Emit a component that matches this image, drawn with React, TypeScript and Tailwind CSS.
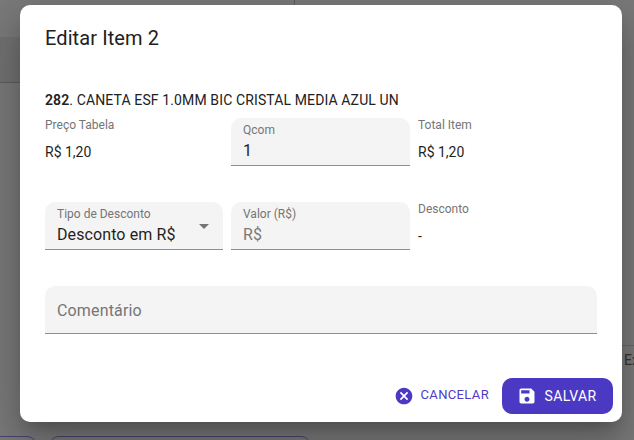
const roboto = "font-['Roboto',sans-serif]";

function Field({ label, value, muted }: { label: string; value: string; muted?: boolean }) {
  return (
    <div className="h-[48px] rounded-t-[10px] bg-[#f4f4f4] border-b border-[#8f8f8f] px-3 flex flex-col">
      <span className="text-xs leading-[14px] text-[#757575] mt-[5px]">{label}</span>
      <span className={`text-base leading-[24px] tracking-[0.1px] mt-[2px] ${muted ? "text-[#7a7a7a]" : "text-[#1f1f1f]"}`}>{value}</span>
    </div>
  );
}

function ReadOnly({ label, value }: { label: string; value: string }) {
  return (
    <div className="h-[48px] flex flex-col">
      <span className="text-xs leading-[14px] text-[#757575]">{label}</span>
      <span className="text-sm leading-[20px] text-[#1f1f1f] mt-[10px]">{value}</span>
    </div>
  );
}

export default function App() {
  return (
    <div className={`relative w-[634px] h-[440px] overflow-hidden bg-[#7a7a7a] ${roboto}`}>
      {/* page behind the backdrop */}
      <div className="absolute left-0 top-[37px] w-[20px] h-[46px] bg-[#727272] border-b border-[#5c5c5c]" />
      <div className="absolute left-[294px] top-0 w-px h-[5px] bg-[#5f5f5f]" />
      <div className="absolute left-[622px] top-[345px] w-[12px] h-px bg-[#666666]" />
      <span className="absolute left-[624px] top-[352px] text-sm leading-[16px] text-[#333333]">Ex</span>
      <div className="absolute left-[-10px] top-[436px] w-[47px] h-[20px] rounded-[10px] border border-[#4a4372]" />
      <div className="absolute left-[49px] top-[436px] w-[262px] h-[20px] rounded-[10px] border border-[#4a4372]" />

      {/* dialog */}
      <div className="absolute left-[20px] top-[5px] w-[602px] h-[417px] bg-white rounded-[10px] shadow-[0_11px_15px_-7px_rgba(0,0,0,0.2),0_24px_38px_3px_rgba(0,0,0,0.14),0_9px_46px_8px_rgba(0,0,0,0.12)] flex flex-col pl-[25px] pr-[25px]">
        <h2 className="text-xl leading-[24px] tracking-[0.1px] text-[#212121] mt-[21px]">Editar Item 2</h2>
        <p className="text-sm leading-[20px] tracking-[0.12px] text-[#212121] mt-[40px]">
          <b className="font-semibold">282</b>. CANETA ESF 1.0MM BIC CRISTAL MEDIA AZUL UN
        </p>
        <div className="grid grid-cols-[178px_179px_1fr] gap-x-2 mt-[8px]">
          <ReadOnly label="Preço Tabela" value="R$ 1,20" />
          <Field label="Qcom" value="1" />
          <ReadOnly label="Total Item" value="R$ 1,20" />
        </div>
        <div className="grid grid-cols-[178px_179px_1fr] gap-x-2 mt-[36px]">
          <div className="relative">
            <Field label="Tipo de Desconto" value="Desconto em R$" />
            <svg viewBox="0 0 24 24" className="absolute right-[7px] top-[12px] w-6 h-6 fill-[#757575]">
              <path d="M7 10l5 5 5-5z" />
            </svg>
          </div>
          <Field label="Valor (R$)" value="R$" muted />
          <ReadOnly label="Desconto" value="-" />
        </div>
        <div className="h-[48px] mt-[36px] rounded-t-[10px] bg-[#f4f4f4] border-b border-[#8f8f8f] px-3 pt-[2px] flex items-center text-base tracking-[0.15px] text-[#757575]">
          Comentário
        </div>
        <div className="flex justify-end items-center gap-[13px] mt-[44px] -mr-[16px]">
          <button className="flex items-center gap-[7px] text-[#4f3cc4] text-[13px] tracking-[0.35px]">
            <svg viewBox="0 0 24 24" className="w-5 h-5 fill-[#4b39c3]">
              <path d="M12 2C6.47 2 2 6.47 2 12s4.47 10 10 10 10-4.47 10-10S17.53 2 12 2zm5 13.59L15.59 17 12 13.41 8.41 17 7 15.59 10.59 12 7 8.41 8.41 7 12 10.59 15.59 7 17 8.41 13.41 12 17 15.59z" />
            </svg>
            <span className="-translate-y-px">CANCELAR</span>
          </button>
          <button className="w-[111px] h-[36px] rounded-[10px] bg-[#4b39c3] text-white text-sm tracking-[0.3px] flex items-center justify-center gap-2 pr-[2px]">
            <svg viewBox="0 0 24 24" className="w-5 h-5 fill-white">
              <path d="M17 3H5c-1.11 0-2 .9-2 2v14c0 1.1.89 2 2 2h14c1.1 0 2-.9 2-2V7l-4-4zm-5 16c-1.66 0-3-1.34-3-3s1.34-3 3-3 3 1.34 3 3-1.34 3-3 3zm3-10H5V5h10v4z" />
            </svg>
            SALVAR
          </button>
        </div>
      </div>
    </div>
  );
}
